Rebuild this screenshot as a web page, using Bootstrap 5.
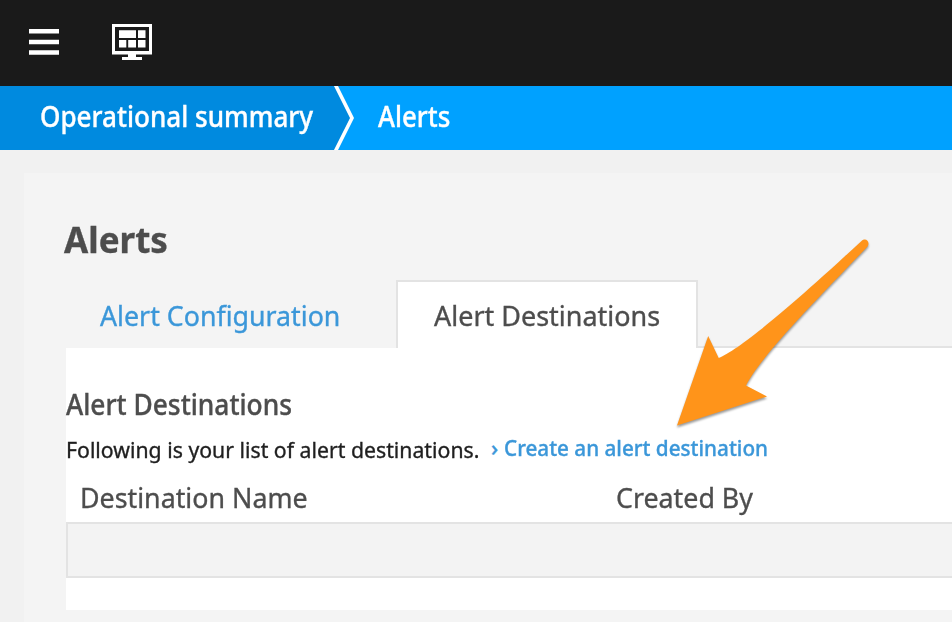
<!DOCTYPE html>
<html lang="en">
<head>
<meta charset="utf-8">
<title>Alerts</title>
<link rel="stylesheet" href="https://cdn.jsdelivr.net/npm/bootstrap@5.3.0/dist/css/bootstrap.min.css">
<style>
body{font-family:"Noto Sans","Open Sans",sans-serif;background:#f1f1f1;color:#4d4d4d;height:622px;overflow:hidden;font-size:28px;-webkit-text-stroke:.35px currentColor}
.topbar{height:86px;background:#1a1a1a;padding:0 0 2px 29px}
.screen-icon{margin-left:53px}
.crumbs{height:64px;background:#00a1ff;color:#fff;line-height:60px;font-weight:500}
.crumb-parent{width:356px;height:64px;position:relative;padding-left:40px}
.crumb-parent svg{position:absolute;left:0;top:0}
.crumbs a{color:#fff;text-decoration:none}
.crumb-current{padding-left:22px}
.fit{display:inline-block;white-space:nowrap;transform-origin:0 50%;position:relative}
.panel{margin:23px 0 0 24px;background:#f4f4f4;height:449px;padding-left:42px}
.page-title{font-size:36px;font-weight:700;line-height:50px;padding-top:42px;margin:0 0 0 -2px;height:107px}
.tabs{height:68px;border-bottom:0;flex-wrap:nowrap}
.tabs .nav-link{border-radius:0;border:0;padding:0;line-height:70px;height:68px;color:#3b97d9;width:330px;padding-left:34px}
.tabs .nav-link.active{background:#fff;border:2px solid #e3e3e3;border-bottom:0;width:302px;padding-left:36px;color:#4d4d4d;line-height:66px}
.tab-rest{border-bottom:2px solid #e3e3e3}
.sheet{height:262px;background:#fff;padding-top:36px}
.sub{font-size:28px;font-weight:500;line-height:40px;height:44px;margin:0}
.intro{height:46px;font-size:22px;line-height:42px;color:#1f1f1f}
.intro a{color:#3b97d9;text-decoration:none;font-weight:500;line-height:39px}
.chev{width:13px}
.intro-text{width:425px}
.dest-head{height:48px;line-height:46px}
.dest-head .name-col{width:536px}
.dest-head .fit{margin-left:14px}
.empty-row{height:56px;border:2px solid #e3e3e3;border-right:0;background:#f3f3f3}
.pointer{position:absolute;left:660px;top:225px;filter:drop-shadow(0 2px 1px rgba(0,0,0,.4))}
.t1{transform:scaleX(.931)}
.t2{transform:scaleX(.925)}
.t3{transform:scaleX(.972)}
.t4{transform:scaleX(.956)}
.t5{transform:scaleX(.963)}
.t6{transform:scaleX(.94)}
.t7{transform:scaleX(.966)}
.t9{transform:scaleX(.94)}
.t10,.t11{transform:scaleX(.957)}
</style>
<script src="https://cdn.jsdelivr.net/npm/bootstrap@5.3.0/dist/js/bootstrap.bundle.min.js"></script>
</head>
<body>
<nav class="topbar navbar justify-content-start flex-nowrap">
  <svg width="30" height="26" viewBox="0 0 30 26" fill="#fff"><path d="M0 0h30v4.500H0zM0 10.700h30v4.500H0zM0 21.200h30v4.500H0z"/></svg>
  <svg class="screen-icon" width="40" height="36" viewBox="0 0 40 36"><path fill="#fff" fill-rule="evenodd" d="M0 0h40v30.500H24v2.500h6v3H10v-3h6v-2.500H0zM3 3v24h34V3z"/><path fill="#fff" d="M7 6.300h17v7.700H7zM26 6.300h7.500v7.700H26zM7 16h7.300v7.500H7zM16.200 16h7.800v7.500h-7.800zM26 16h7.500v7.500H26z"/></svg>
</nav>
<div class="crumbs d-flex">
  <div class="crumb-parent">
    <svg width="356" height="64" viewBox="0 0 356 64"><path fill="#008adf" d="M0 0h336l17 32-17 32H0z"/><path fill="none" stroke="#fff" stroke-width="3.600" d="M335.500-1 352 32l-16.500 33"/></svg>
    <a href="#" class="fit t1">Operational summary</a>
  </div>
  <div class="crumb-current"><span class="fit t2">Alerts</span></div>
</div>
<main class="panel">
  <h1 class="page-title"><span class="fit t3">Alerts</span></h1>
  <div class="tabs nav nav-tabs">
    <a class="nav-link" href="#"><span class="fit t4">Alert Configuration</span></a>
    <a class="nav-link active" href="#"><span class="fit t5">Alert Destinations</span></a>
    <div class="tab-rest flex-grow-1"></div>
  </div>
  <section class="sheet">
    <h2 class="sub"><span class="fit t6">Alert Destinations</span></h2>
    <div class="intro d-flex">
      <div class="intro-text"><span class="fit t7">Following is your list of alert destinations.</span></div>
      <a href="#" class="d-flex"><span class="chev">›</span><span class="fit t9">Create an alert destination</span></a>
    </div>
    <div class="dest-head d-flex">
      <div class="name-col"><span class="fit t10">Destination Name</span></div>
      <div><span class="fit t11">Created By</span></div>
    </div>
    <div class="empty-row"></div>
  </section>
</main>
<svg class="pointer" width="240" height="215" viewBox="0 0 240 215"><path fill="#ff941a" d="M17 200.500 48.200 111 58.700 133C77 125 115 96 201.500 16C206 12 210.500 17 207.500 21.500C175 56 103 127 86 160.500L107 171.500z"/></svg>
</body>
</html>
